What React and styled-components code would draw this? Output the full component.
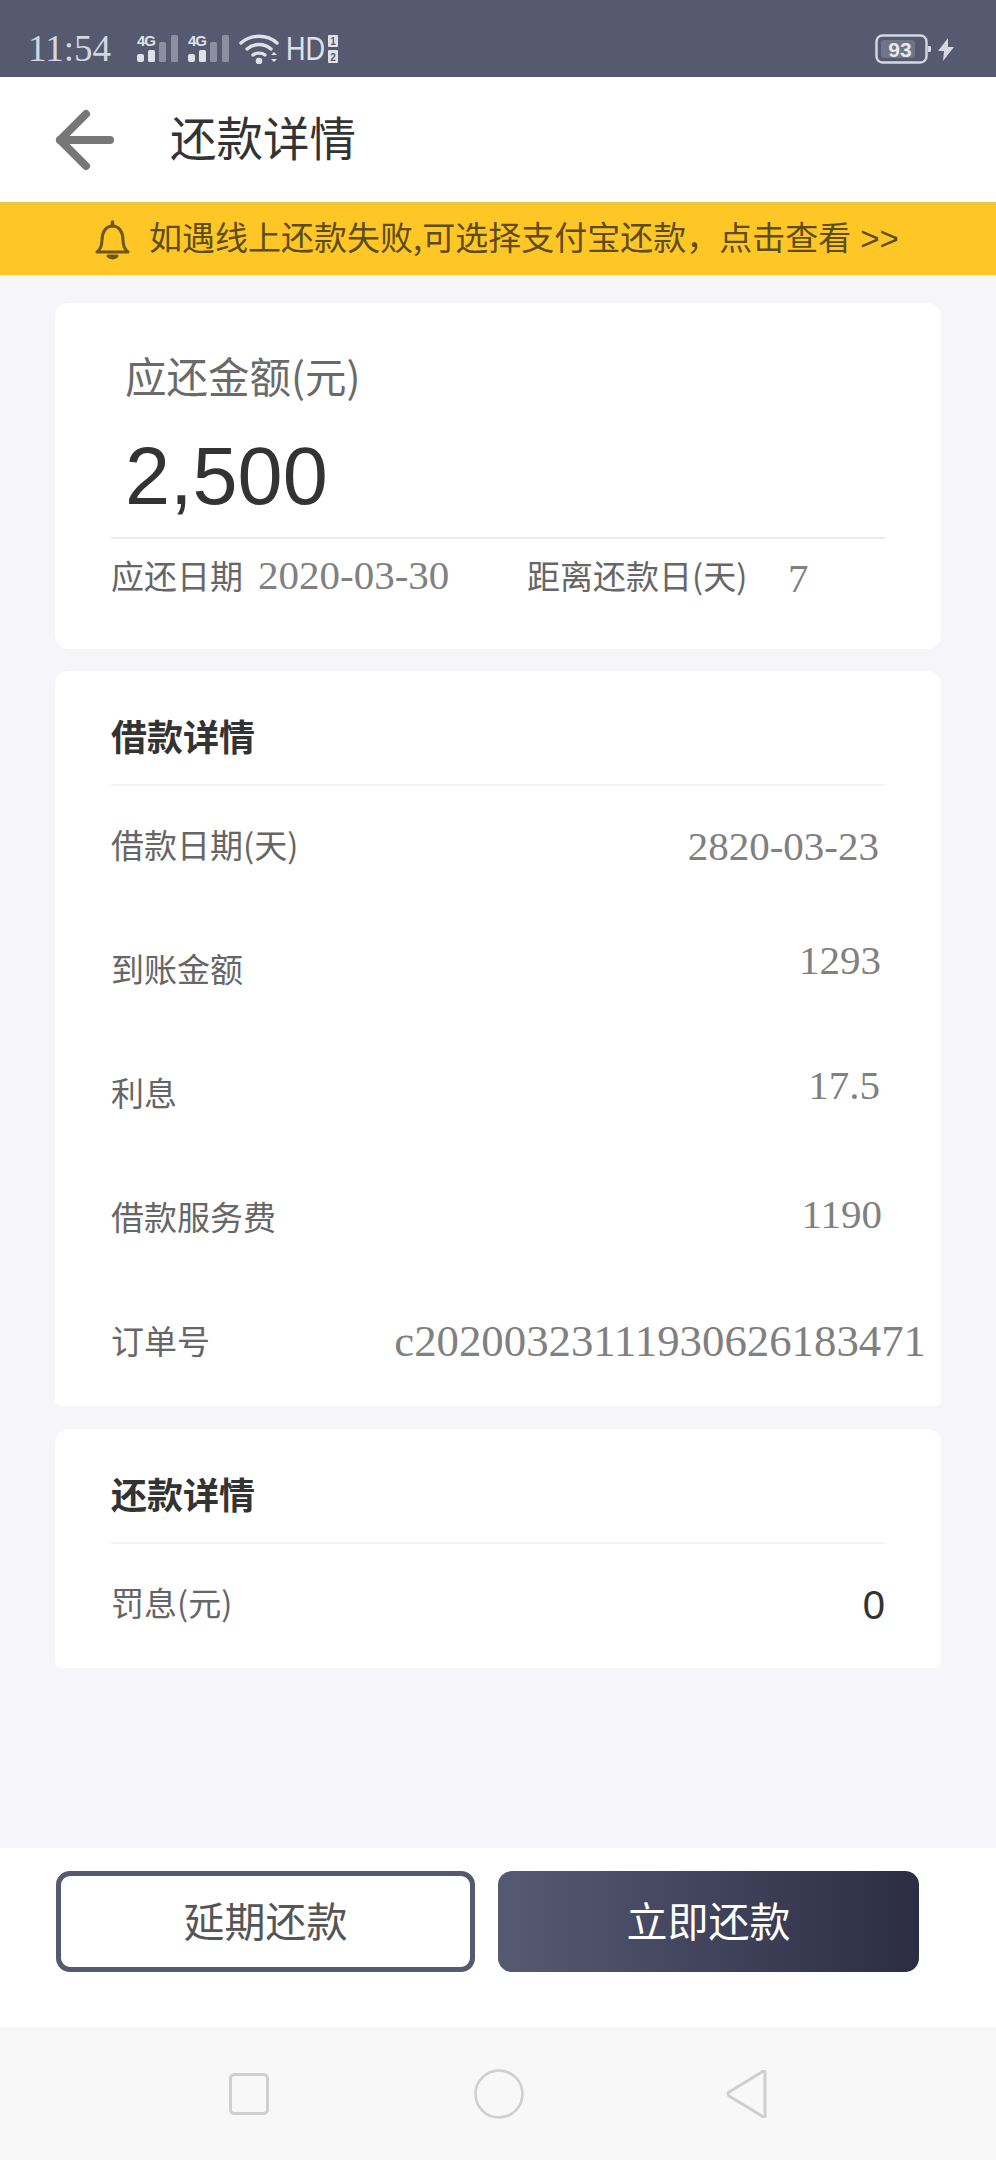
import React from 'react';
import styled, { createGlobalStyle } from 'styled-components';

const CJK = '"Noto Sans CJK SC", "Liberation Sans", sans-serif';
const SERIF = '"Liberation Serif", "Noto Sans CJK SC", serif';
const SANS = '"Liberation Sans", "Noto Sans CJK SC", sans-serif';

const Global = createGlobalStyle`
  html, body { margin: 0; padding: 0; background: #f6f6fa; }
  * { box-sizing: border-box; }
`;

const Page = styled.div`
  width: 996px;
  height: 2160px;
  display: flex;
  flex-direction: column;
  overflow: hidden;
  background: #f6f6fa;
  font-family: ${CJK};
`;

const StatusBar = styled.div`
  height: 77px;
  flex: none;
  background: #555a70;
  display: flex;
  align-items: center;
  padding: 21px 41px 0 28px;
  color: #d3d6df;
`;
const Time = styled.span`
  font-family: ${SERIF};
  font-size: 37px;
  line-height: 40px;
  width: 109px;
  margin-top: -1px;
`;
const StatusIcons = styled.div`
  display: flex;
  align-items: center;
  gap: 10px;
  flex: 1;
`;
const StatusRight = styled.div`
  display: flex;
  align-items: center;
  gap: 7px;
`;

const Header = styled.header`
  height: 125px;
  flex: none;
  background: #fff;
  display: flex;
  align-items: center;
  padding: 0 0 0 52px;
  gap: 52px;
`;
const Title = styled.h1`
  margin: 0;
  padding-bottom: 7px;
  font-size: 46.5px;
  line-height: 60px;
  font-weight: 400;
  color: #333;
`;

const Banner = styled.div`
  height: 73px;
  flex: none;
  background: #fec726;
  border-top: 3px solid #ecc73c;
  display: flex;
  align-items: center;
  padding-left: 95px;
  gap: 19px;
  color: #5d4c14;
  font-size: 33px;
  white-space: nowrap;
`;
const BannerText = styled.span`
  padding-bottom: 8px;
`;
const Chevrons = styled.span`
  font-family: ${SANS};
  margin-left: 9px;
`;

const Main = styled.main`
  flex: 1;
  padding: 28px 55px 0;
  display: flex;
  flex-direction: column;
`;
const Card = styled.section`
  background: #fff;
  border-radius: 14px 14px ${p => p.$foot ?? 14}px ${p => p.$foot ?? 14}px;
  padding: 0 56px;
  margin-bottom: ${p => p.$gap}px;
`;
const AmountCard = styled(Card)`
  height: 346px;
  padding-top: 49px;
`;
const AmountLabel = styled.div`
  padding-left: 14px;
  font-size: 41.5px;
  line-height: 46px;
  color: #6a6a6a;
`;
const AmountValue = styled.div`
  padding-left: 14px;
  margin-top: 30px;
  height: 111px;
  font-family: ${SANS};
  font-size: 81px;
  line-height: 96px;
  color: #333;
  border-bottom: 2px solid #ececec;
`;
const DueRow = styled.div`
  display: flex;
  align-items: center;
  height: 72px;
  white-space: nowrap;
`;
const DueLabel = styled.span`
  font-size: 33px;
  color: #666;
  width: ${p => p.$w}px;
  flex: none;
`;
const SerifValue = styled.span`
  font-family: ${SERIF};
  font-size: ${p => p.$size || 41}px;
  line-height: 48px;
  color: #808080;
  white-space: nowrap;
`;
const DueDate = styled(SerifValue)`
  width: 269px;
  flex: none;
`;
const DueCount = styled(SerifValue)`
  margin-top: 6px;
`;

const SectionHead = styled.div`
  padding: 44px 0 ${p => p.$after}px;
  border-bottom: 2px solid #f3f3f3;
  font-size: 36px;
  line-height: 40px;
  font-weight: 700;
  color: #333;
`;
const Row = styled.div`
  height: 124px;
  display: flex;
  align-items: center;
  justify-content: space-between;
  padding-right: 5px;
`;
const RowLabel = styled.span`
  font-size: 33px;
  padding-bottom: 8px;
  color: #666;
`;
const RowValue = styled(SerifValue)`
  padding-bottom: ${p => (p.$lift || 0) * 2}px;
  margin-right: ${p => p.$over || 0}px;
`;
const ZeroValue = styled.span`
  font-family: ${SANS};
  font-size: 40px;
  padding-bottom: 2px;
  color: #333;
  margin-right: -5px;
`;

const ActionBar = styled.div`
  height: 179px;
  flex: none;
  background: #fff;
  padding: 23px 77px 55px 56px;
  display: grid;
  grid-template-columns: 419px 421px;
  gap: 23px;
`;
const Button = styled.button`
  border-radius: 14px;
  font-family: ${CJK};
  font-size: 41px;
  padding: 0 0 6px;
  border: ${p => (p.$primary ? '0' : '5px solid #555a70')};
  color: ${p => (p.$primary ? '#fff' : '#555')};
  background: ${p => (p.$primary ? 'linear-gradient(90deg, #555a72, #2c2d45)' : '#fff')};
`;

const NavBar = styled.nav`
  height: 133px;
  flex: none;
  background: #f8f8f8;
  display: flex;
  align-items: center;
  padding-left: 229px;
`;
const NavSlot = styled.span`
  display: flex;
  margin-right: ${p => p.$after || 0}px;
`;

const Signal = () => (
  <svg width="41" height="38" viewBox="0 -4 41 38">
    <text x="0" y="12" fontFamily="Liberation Sans" fontWeight="700" fontSize="15" textLength="19" fill="#dfe1e8">4G</text>
    <rect x="0" y="20" width="7" height="8" rx="2" fill="#dfe1e8" />
    <rect x="11" y="16" width="7" height="12" rx="1.5" fill="#dfe1e8" />
    <rect x="22" y="8" width="7" height="20" rx="1.5" fill="#8b8fa0" />
    <rect x="34" y="1" width="7" height="27" rx="1.5" fill="#8b8fa0" />
  </svg>
);

const Wifi = () => (
  <svg width="40" height="30" viewBox="0 0 40 30" fill="none" stroke="#dfe1e8" strokeWidth="3.4" strokeLinecap="round">
    <path d="M2 9C12 0 28 0 38 9" />
    <path d="M8 15C15 9 25 9 32 15" />
    <path d="M14 21C17 18.500 23 18.500 26 21" />
    <circle cx="20" cy="27" r="1.600" fill="#dfe1e8" />
    <path d="M32 21l3-3 3 3zM32 25l3 3 3-3z" fill="#dfe1e8" stroke="none" />
  </svg>
);

const HdBadge = () => (
  <svg width="52" height="46" viewBox="0 -8 52 46" style={{ marginLeft: -3 }}>
    <g transform="scale(0.82 1)">
      <text x="0" y="26" fontFamily="Liberation Sans" fontSize="33" fill="#dfe1e8">HD</text>
    </g>
    <rect x="42" y="1" width="10" height="12" rx="1" fill="#dfe1e8" />
    <rect x="42" y="16" width="10" height="13" rx="1" fill="#dfe1e8" />
    <text x="47" y="11" textAnchor="middle" fontFamily="Liberation Sans" fontWeight="700" fontSize="10" fill="#555a70">1</text>
    <text x="47" y="27" textAnchor="middle" fontFamily="Liberation Sans" fontWeight="700" fontSize="10" fill="#555a70">2</text>
  </svg>
);

const Battery = () => (
  <svg width="56" height="30" viewBox="0 0 56 30">
    <rect x="1.500" y="1.500" width="50" height="27" rx="6" fill="none" stroke="#d5d8e2" strokeWidth="2.400" />
    <rect x="6" y="6" width="34" height="18" rx="3" fill="#6f7487" />
    <path d="M53 12h1.500a2 3 0 0 1 0 6H53z" fill="#d5d8e2" />
    <text x="25" y="23" textAnchor="middle" fontFamily="Liberation Sans" fontWeight="700" fontSize="21" fill="#e6e8ee">93</text>
  </svg>
);

const Bolt = () => (
  <svg width="17" height="23" viewBox="0 0 17 23">
    <path d="M10 0L0 13h6l-1 10L16 9h-6z" fill="#d5d8e2" />
  </svg>
);

const BackArrow = () => (
  <svg width="66" height="66" viewBox="0 0 66 66" fill="none" stroke="#777" strokeWidth="8" strokeLinecap="round" strokeLinejoin="round">
    <path d="M58 33H8" />
    <path d="M34 7L8 33l26 26" />
  </svg>
);

const Bell = () => (
  <svg width="35" height="40" viewBox="0 0 35 40" fill="none" stroke="#6e5716" strokeWidth="3" strokeLinejoin="round">
    <path d="M2 32c4-3 5-6 5-12 0-8 4-14 10.500-14S28 12 28 20c0 6 1 9 5 12z" />
    <path d="M17.500 2v4" strokeLinecap="round" strokeWidth="3.500" />
    <path d="M13 36c2 2.500 7 2.500 9 0z" fill="#6e5716" />
  </svg>
);

const NavSquare = () => (
  <svg width="40" height="42" viewBox="0 0 40 42" fill="none" stroke="#cfcfcf" strokeWidth="3">
    <rect x="1.500" y="1.500" width="37" height="39" rx="4" />
  </svg>
);
const NavCircle = () => (
  <svg width="50" height="50" viewBox="0 0 50 50" fill="none" stroke="#cfcfcf" strokeWidth="2.600">
    <circle cx="25" cy="25" r="23.500" />
  </svg>
);
const NavBack = () => (
  <svg width="42" height="48" viewBox="0 0 42 48" fill="none" stroke="#cfcfcf" strokeWidth="3" strokeLinejoin="round">
    <path d="M39 3v42a1.500 1.500 0 0 1-3 1L3 26a3 3 0 0 1 0-4L36 2a1.500 1.500 0 0 1 3 1z" />
  </svg>
);

const loanRows = [
  { label: '借款日期(天)', value: '2820-03-23', over: 1, lift: 2 },
  { label: '到账金额', value: '1293', over: -1, lift: 12 },
  { label: '利息', value: '17.5', lift: 11 },
  { label: '借款服务费', value: '1190', over: -2, lift: 6 },
  { label: '订单号', value: 'c20200323111930626183471', over: -46, lift: 3, size: 44.8 },
];

export default function App() {
  return (
    <Page>
      <Global />
      <StatusBar>
        <Time>11:54</Time>
        <StatusIcons>
          <Signal />
          <Signal />
          <Wifi />
          <HdBadge />
        </StatusIcons>
        <StatusRight>
          <Battery />
          <Bolt />
        </StatusRight>
      </StatusBar>
      <Header>
        <BackArrow />
        <Title>还款详情</Title>
      </Header>
      <Banner>
        <Bell />
        <BannerText>如遇线上还款失败,可选择支付宝还款，点击查看<Chevrons>&gt;&gt;</Chevrons></BannerText>
      </Banner>
      <Main>
        <AmountCard $gap={22}>
          <AmountLabel>应还金额(元)</AmountLabel>
          <AmountValue>2,500</AmountValue>
          <DueRow>
            <DueLabel $w={147}>应还日期</DueLabel>
            <DueDate>2020-03-30</DueDate>
            <DueLabel $w={261}>距离还款日(天)</DueLabel>
            <DueCount>7</DueCount>
          </DueRow>
        </AmountCard>
        <Card $gap={23} $foot={6}>
          <SectionHead $after={29}>借款详情</SectionHead>
          {loanRows.map(r => (
            <Row key={r.label}>
              <RowLabel>{r.label}</RowLabel>
              <RowValue $lift={r.lift} $over={r.over} $size={r.size}>{r.value}</RowValue>
            </Row>
          ))}
        </Card>
        <Card $gap={0} $foot={6}>
          <SectionHead $after={29}>还款详情</SectionHead>
          <Row>
            <RowLabel>罚息(元)</RowLabel>
            <ZeroValue>0</ZeroValue>
          </Row>
        </Card>
      </Main>
      <ActionBar>
        <Button>延期还款</Button>
        <Button $primary>立即还款</Button>
      </ActionBar>
      <NavBar>
        <NavSlot $after={205}><NavSquare /></NavSlot>
        <NavSlot $after={202}><NavCircle /></NavSlot>
        <NavSlot><NavBack /></NavSlot>
      </NavBar>
    </Page>
  );
}
